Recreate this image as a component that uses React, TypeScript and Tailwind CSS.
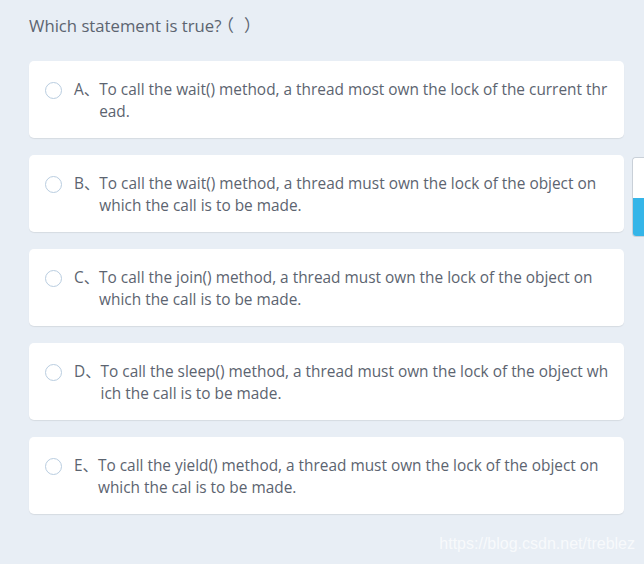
import type { ReactNode } from 'react'

const options: { key: string; text: ReactNode }[] = [
  { key: 'A', text: 'To call the wait() method, a thread most own the lock of the current thread.' },
  { key: 'B', text: 'To call the wait() method, a thread must own the lock of the object on which the call is to be made.' },
  {
    key: 'C',
    text: (
      <>
        To call the join() method, a thread must own the lock of the object on{' '}
        <span className="whitespace-nowrap">which</span> the call is to be made.
      </>
    ),
  },
  { key: 'D', text: 'To call the sleep() method, a thread must own the lock of the object which the call is to be made.' },
  { key: 'E', text: 'To call the yield() method, a thread must own the lock of the object on which the cal is to be made.' },
]

export default function App() {
  return (
    <div
      className="relative w-[644px] h-[564px] overflow-hidden bg-[#e8eef5] text-[#5c6470]"
      style={{ fontFamily: '"Open Sans", "Noto Sans CJK SC", sans-serif' }}
    >
      <div className="pl-[29px] pr-[20px] pt-[12px]">
        <h1 className="text-[16.7px] leading-[28px]">
          Which statement is true<span className="tracking-[-4px]">?</span>
          <span className="tracking-[10px]">（</span>
          <span>）</span>
        </h1>

        <div className="mt-[21px] flex flex-col gap-[17px] w-[595px]">
          {options.map((o) => (
            <label
              key={o.key}
              className="flex items-start bg-white rounded-[5px] shadow-[0_1px_1px_rgba(0,0,0,0.08)] pl-[16px] pr-[14px] pt-[18px] pb-[15px] h-[77px] cursor-pointer"
            >
              <span className="mt-[3px] w-[17px] h-[17px] shrink-0 rounded-full border-[1.5px] border-[#b9cde0] bg-white" />
              <span className="ml-[12px] text-[15.4px] leading-[22px] shrink-0">{o.key}、</span>
              <span className="text-[15.4px] leading-[22px] break-all">{o.text}</span>
            </label>
          ))}
        </div>
      </div>

      <div className="absolute left-[632px] top-[157px] w-[20px] h-[80px] rounded-tl-[4px] rounded-bl-[4px] overflow-hidden border border-[#c9d0d8] border-r-0">
        <div className="h-[40px] bg-white" />
        <div className="h-[40px] bg-[#35b5e8]" />
      </div>

      <div
        className="absolute right-[9px] bottom-[8px] text-[16px] text-white/70"
        style={{ fontFamily: '"Liberation Sans", Arial, sans-serif' }}
      >
        https://blog.csdn.net/treblez
      </div>
    </div>
  )
}
